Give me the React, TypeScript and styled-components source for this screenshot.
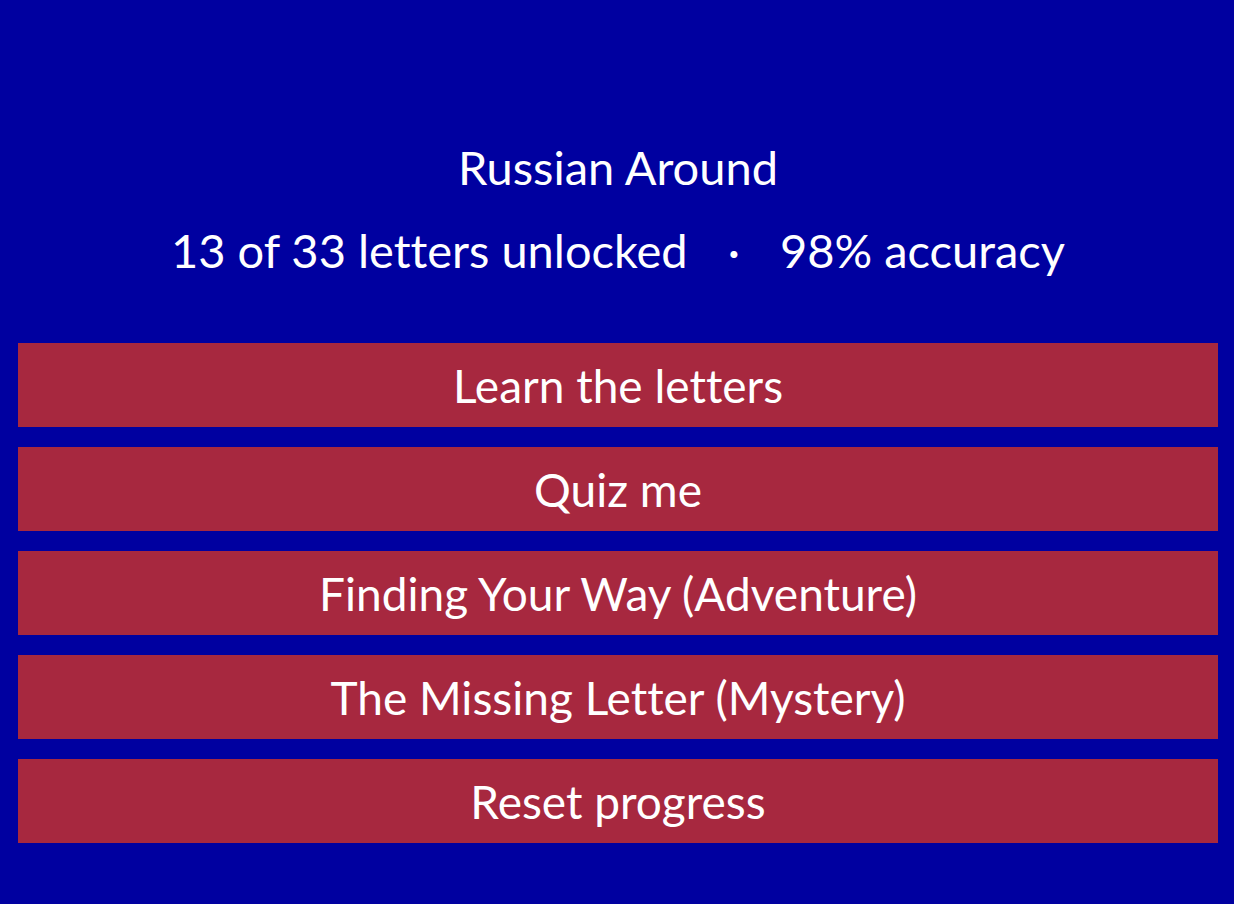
import styled, { createGlobalStyle } from "styled-components";

const GlobalStyle = createGlobalStyle`
  html, body {
    margin: 0;
    padding: 0;
    background: #0000a0;
  }
  body {
    font-family: Lato, "Open Sans", sans-serif;
    font-variant-ligatures: none;
    color: #ffffff;
  }
`;

const Page = styled.div`
  display: flex;
  flex-direction: column;
  align-items: stretch;
  min-height: 904px;
  box-sizing: border-box;
  padding: 139px 16px 0 18px;
  background: #0000a0;
`;

const Header = styled.header`
  display: flex;
  flex-direction: column;
  align-items: center;
`;

const Title = styled.h1`
  margin: 0;
  font-size: 47px;
  line-height: 56px;
  font-weight: 400;
`;

const Stats = styled.div`
  display: flex;
  gap: 40px;
  margin-top: 27px;
  font-size: 47px;
  line-height: 56px;
`;

const Menu = styled.nav`
  display: flex;
  flex-direction: column;
  gap: 20px;
  margin-top: 65px;
`;

const Button = styled.button`
  height: 84px;
  border: none;
  padding: 0;
  background: #a7283f;
  color: #ffffff;
  font-family: Lato, "Open Sans", sans-serif;
  font-variant-ligatures: none;
  font-size: 46px;
  cursor: pointer;
`;

const items = [
  "Learn the letters",
  "Quiz me",
  "Finding Your Way (Adventure)",
  "The Missing Letter (Mystery)",
  "Reset progress",
];

function App() {
  return (
    <>
      <GlobalStyle />
      <Page>
        <Header>
          <Title>Russian Around</Title>
          <Stats>
            <span>13 of 33 letters unlocked</span>
            <span>·</span>
            <span>98% accuracy</span>
          </Stats>
        </Header>
        <Menu>
          {items.map((label) => (
            <Button key={label}>{label}</Button>
          ))}
        </Menu>
      </Page>
    </>
  );
}

export default App;
